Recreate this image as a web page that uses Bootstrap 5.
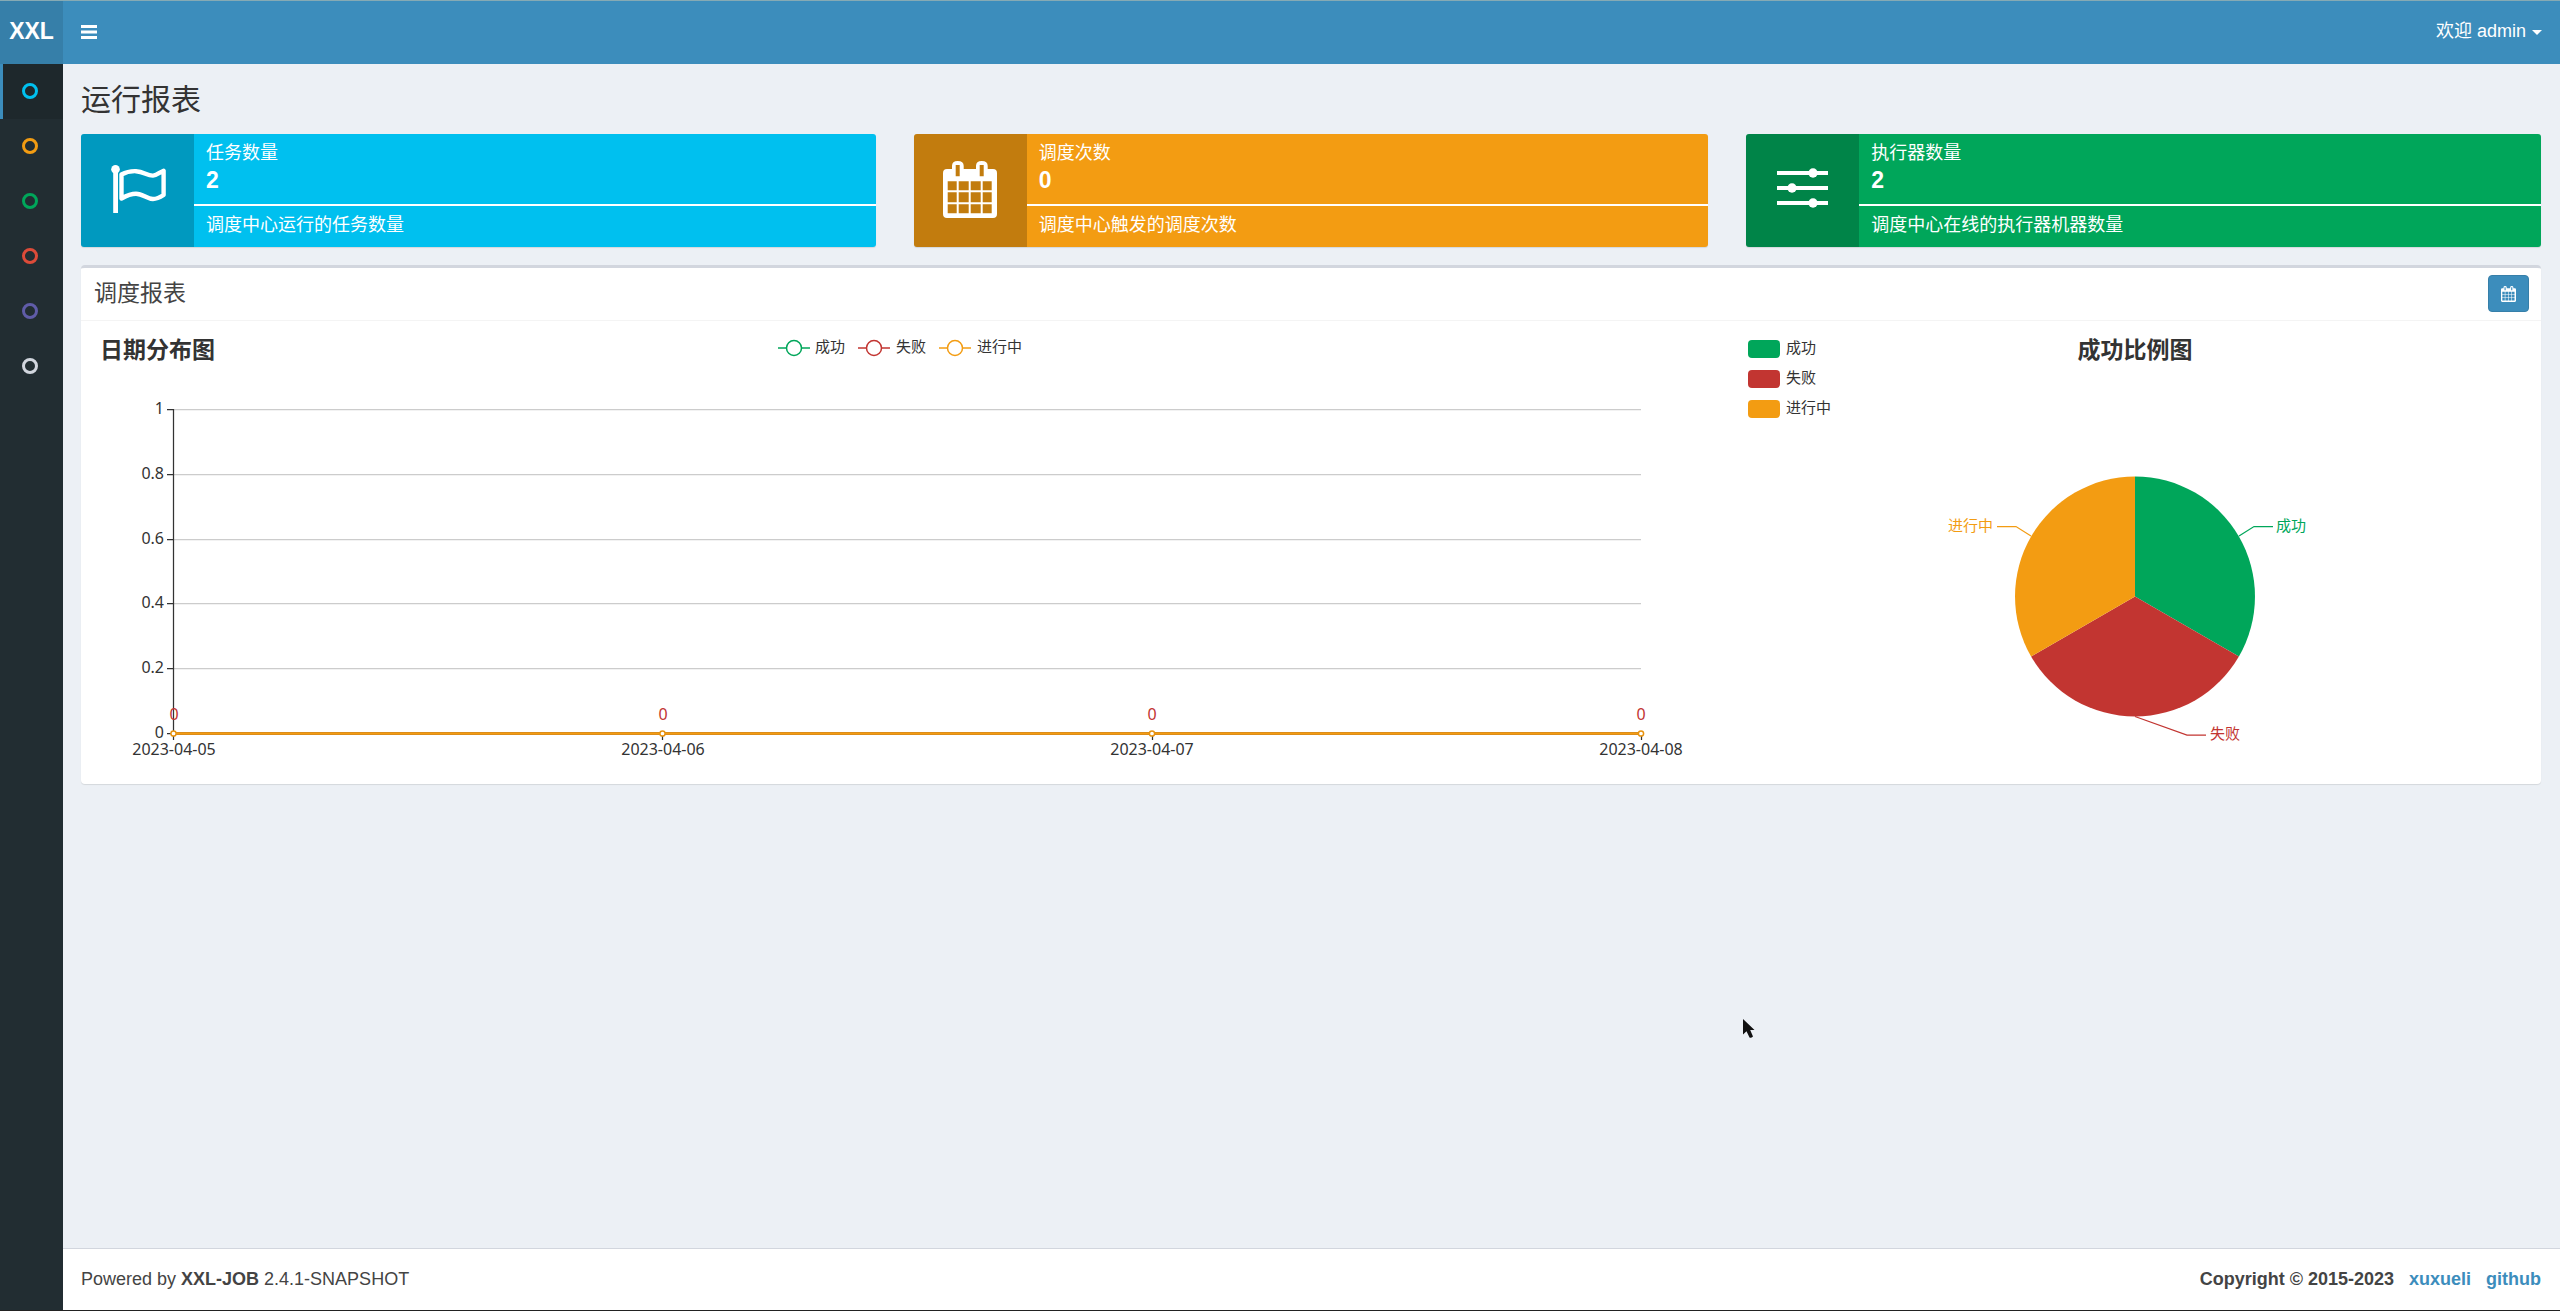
<!DOCTYPE html>
<html lang="zh-CN">
<head>
<meta charset="utf-8">
<meta name="viewport" content="width=device-width, initial-scale=1">
<title>任务调度中心</title>
<link href="https://cdn.jsdelivr.net/npm/bootstrap@5.3.0/dist/css/bootstrap.min.css" rel="stylesheet">
<style>
  :root { --ui-font: "Liberation Sans", "Noto Sans CJK SC", sans-serif; --gap: 18px; }
  body { font-family: var(--ui-font); font-size: 18px; line-height: 25px; color: #444; background: #ecf0f5;
         border-top: 1px solid #86aab4; border-bottom: 1px solid #222; }
  .app-header { height: 63px; background: #3c8dbc; }
  .app-logo { width: 63px; background: #367fa9; color: #fff; font-size: 23px; font-weight: 700; text-decoration: none; padding-bottom: 2px; }
  .bar-btn { border: 0; background: transparent; color: #fff; padding: 0 var(--gap) 2px; }
  .bar-btn::after { margin-left: 6px !important; vertical-align: 2px !important; }
  .app-side { width: 63px; background: #222d32; }
  .side-link { height: 55px; border-left: 3px solid transparent; padding: 0 7px 2px 0; }
  .side-link.active { background: #1e282c; border-left-color: #3c8dbc; }
  .ring { width: 16px; height: 16px; border: 3px solid currentColor; border-radius: 50%; }
  .app-content { padding: 0 19px 0 var(--gap); }
  .page-title { font-size: 30px; line-height: 68px; font-weight: 400; color: #333; margin: 0; padding-top: 2px; }
  .wide-gutter { --bs-gutter-x: 38px; }
  .stat-box { color: #fff; border-radius: 3px; overflow: hidden; box-shadow: 0 1px 1px rgba(0,0,0,.1); }
  .stat-icon { width: 113px; height: 113px; background: rgba(0,0,0,.2); padding-bottom: 3px; }
  .stat-text { padding: 7px 12px 0; }
  .stat-num { font-size: 23px; line-height: 28px; font-weight: 700; }
  .stat-line { height: 2px; margin: 10px -12px 7px; background: #fff; }
  .bg-aqua { background: #00c0ef; } .bg-amber { background: #f39c12; } .bg-leaf { background: #00a65a; }
  .panel { margin-top: var(--gap); background: #fff; border-top: 3px solid #d2d6de; border-radius: 4px; box-shadow: 0 1px 1px rgba(0,0,0,.1); }
  .panel-head { height: 53px; padding: 0 12px 1px 13px; border-bottom: 1px solid #f4f4f4; }
  .panel-title { font-size: 23px; font-weight: 400; margin: 0; }
  .panel-body { padding: 13px; }
  .btn-date { width: 41px; height: 37px; padding: 0; background: #3c8dbc; border: 1px solid #367fa9; color: #fff; border-radius: 4px; }
  .chart { display: block; width: 100%; height: auto; overflow: visible; font-family: "Noto Sans", "Noto Sans CJK SC", sans-serif; font-size: 15px; fill: #333; }
  .chart .axis-num { font-size: 16px; }
  .chart .chart-title { font-size: 23px; font-weight: 700; }
  .app-footer { background: #fff; border-top: 1px solid #d2d6de; padding: 18px 19px 18px var(--gap); }
  .app-footer a { color: #3c8dbc; text-decoration: none; margin-left: 15px; }
  .pointer { left: 68.09%; top: 1018px; pointer-events: none; }
</style>
</head>
<body class="min-vh-100 d-flex flex-column position-relative">
<svg width="0" height="0" class="position-absolute" aria-hidden="true">
  <symbol id="calendar" viewBox="0 0 54 57">
    <path fill="currentColor" fill-rule="evenodd" d="M4 8H9V5Q9 0 14.700 0Q20.700 0 20.700 5V8H33V5Q33 0 38.700 0Q44.700 0 44.700 5V8H50Q54 8 54 12V53Q54 57 50 57H4Q0 57 0 53V12Q0 8 4 8Z
      M12.700 4H16.700V15.300H12.700Z M36.700 4H40.700V15.300H36.700Z
      M4.700 20.300H13.700V29.300H4.700Z M15.700 20.300H25.700V29.300H15.700Z M27.700 20.300H37.700V29.300H27.700Z M39.700 20.300H48.700V29.300H39.700Z
      M4.700 31.300H13.700V41.300H4.700Z M15.700 31.300H25.700V41.300H15.700Z M27.700 31.300H37.700V41.300H27.700Z M39.700 31.300H48.700V41.300H39.700Z
      M4.700 43.300H13.700V52.300H4.700Z M15.700 43.300H25.700V52.300H15.700Z M27.700 43.300H37.700V52.300H27.700Z M39.700 43.300H48.700V52.300H39.700Z"/>
  </symbol>
</svg>

<header class="app-header d-flex">
  <a href="#" class="app-logo d-flex align-items-center justify-content-center">XXL</a>
  <nav class="d-flex flex-grow-1 justify-content-between">
    <button type="button" class="bar-btn d-flex align-items-center" aria-label="切换侧边栏">
      <svg width="16" height="14" viewBox="0 0 16 14" fill="currentColor"><path d="M0 0H16V3H0ZM0 5.500H16V8.500H0ZM0 11H16V14H0Z"/></svg>
    </button>
    <div class="dropdown d-flex">
      <button type="button" class="bar-btn dropdown-toggle" data-bs-toggle="dropdown" aria-expanded="false">欢迎 admin</button>
      <ul class="dropdown-menu dropdown-menu-end"><li><a class="dropdown-item" href="#">注销</a></li></ul>
    </div>
  </nav>
</header>

<div class="d-flex flex-grow-1">
  <aside class="app-side flex-shrink-0">
    <nav class="d-flex flex-column">
      <a href="#" class="side-link active d-flex align-items-center justify-content-center" aria-label="运行报表" style="color:#00c0ef"><span class="ring"></span></a>
      <a href="#" class="side-link d-flex align-items-center justify-content-center" aria-label="任务管理" style="color:#f39c12"><span class="ring"></span></a>
      <a href="#" class="side-link d-flex align-items-center justify-content-center" aria-label="调度日志" style="color:#00a65a"><span class="ring"></span></a>
      <a href="#" class="side-link d-flex align-items-center justify-content-center" aria-label="执行器管理" style="color:#dd4b39"><span class="ring"></span></a>
      <a href="#" class="side-link d-flex align-items-center justify-content-center" aria-label="用户管理" style="color:#605ca8"><span class="ring"></span></a>
      <a href="#" class="side-link d-flex align-items-center justify-content-center" aria-label="使用教程" style="color:#d2d6de"><span class="ring"></span></a>
    </nav>
  </aside>

  <div class="d-flex flex-column flex-grow-1">
    <main class="app-content flex-grow-1">
      <h1 class="page-title">运行报表</h1>
      <div class="row wide-gutter">
        <div class="col-4">
          <div class="stat-box bg-aqua d-flex">
            <div class="stat-icon d-flex align-items-center justify-content-center">
              <svg width="57" height="48" viewBox="-2 0 57 48"><circle cx="4.500" cy="4.300" r="4.300" fill="#fff"/><path d="M2.200 4H7V48H2.200Z" fill="#fff"/><path d="M10.500 9.500C16 6.500 20 6 25 6.200C33 6.500 36 10.800 42 10.600C46 10.400 49 7 52.600 5.800V30C48 33 45 34 42 34C36 34 32 28.800 25 28.800C19 28.800 15 31 10.500 33.500Z" fill="none" stroke="#fff" stroke-width="4.400" stroke-linejoin="round"/></svg>
            </div>
            <div class="stat-text flex-grow-1">
              <div>任务数量</div><div class="stat-num">2</div><div class="stat-line"></div><div>调度中心运行的任务数量</div>
            </div>
          </div>
        </div>
        <div class="col-4">
          <div class="stat-box bg-amber d-flex">
            <div class="stat-icon d-flex align-items-center justify-content-center">
              <svg width="54" height="57" color="#fff"><use href="#calendar"/></svg>
            </div>
            <div class="stat-text flex-grow-1">
              <div>调度次数</div><div class="stat-num">0</div><div class="stat-line"></div><div>调度中心触发的调度次数</div>
            </div>
          </div>
        </div>
        <div class="col-4">
          <div class="stat-box bg-leaf d-flex">
            <div class="stat-icon d-flex align-items-center justify-content-center">
              <svg width="51" height="42" viewBox="0 0 51 42" fill="#fff"><path d="M0 3H51V7H0ZM0 18H51V22H0ZM0 33H51V37H0Z"/><circle cx="36" cy="5" r="4.700"/><circle cx="15" cy="20" r="4.700"/><circle cx="36" cy="35" r="4.700"/></svg>
            </div>
            <div class="stat-text flex-grow-1">
              <div>执行器数量</div><div class="stat-num">2</div><div class="stat-line"></div><div>调度中心在线的执行器机器数量</div>
            </div>
          </div>
        </div>
      </div>

      <section class="panel">
        <div class="panel-head d-flex align-items-center justify-content-between">
          <h2 class="panel-title">调度报表</h2>
          <button type="button" class="btn btn-date d-flex align-items-center justify-content-center" aria-label="选择日期">
            <svg width="15" height="16"><use href="#calendar"/></svg>
          </button>
        </div>
        <div class="panel-body">
          <div class="row wide-gutter">
            <div class="col-8">
              <svg class="chart" viewBox="0 0 1610 437" role="img" aria-label="日期分布图">
                <text class="chart-title" x="6" y="24">日期分布图</text>
                <g fill="#fff" stroke-width="1.500">
                  <g stroke="#00a65a"><path d="M684 14H716"/><circle cx="700" cy="14" r="7.500"/></g>
                  <g stroke="#c23531"><path d="M764 14H796"/><circle cx="780" cy="14" r="7.500"/></g>
                  <g stroke="#f39c12"><path d="M845 14H877"/><circle cx="861" cy="14" r="7.500"/></g>
                </g>
                <text x="721" y="18">成功</text><text x="802" y="18">失败</text><text x="883" y="18">进行中</text>
                <path d="M79 75.500H1547M79 140.500H1547M79 205.500H1547M79 269.500H1547M79 334.500H1547" stroke="#ccc" stroke-width="1.250"/>
                <path d="M79.500 75V406M73 75.500H79M73 140.500H79M73 205.500H79M73 269.500H79M73 334.500H79M73 399.500H79M568.500 400V406M1058.500 400V406M1547.500 400V406" stroke="#333" stroke-width="1.250"/>
                <g class="axis-num" text-anchor="end">
                  <text x="70" y="80">1</text><text x="70" y="145">0.8</text><text x="70" y="210">0.6</text><text x="70" y="274">0.4</text><text x="70" y="339">0.2</text><text x="70" y="404">0</text>
                </g>
                <g class="axis-num" text-anchor="middle">
                  <text x="80" y="421">2023-04-05</text><text x="569" y="421">2023-04-06</text><text x="1058" y="421">2023-04-07</text><text x="1547" y="421">2023-04-08</text>
                </g>
                <g class="axis-num" text-anchor="middle" fill="#c23531">
                  <text x="80" y="386">0</text><text x="569" y="386">0</text><text x="1058" y="386">0</text><text x="1547" y="386">0</text>
                </g>
                <path d="M79 399.500H1547" stroke="#c47f22" stroke-width="3"/>
                <path d="M79 399.500H1547" stroke="#f39c12" stroke-width="2"/>
                <g fill="#fff" stroke="#e8930f" stroke-width="1.500">
                  <circle cx="79.500" cy="399.500" r="2.600"/><circle cx="568.500" cy="399.500" r="2.600"/><circle cx="1058" cy="399.500" r="2.600"/><circle cx="1547" cy="399.500" r="2.600"/>
                </g>
              </svg>
            </div>
            <div class="col-4">
              <svg class="chart" viewBox="0 0 786 437" role="img" aria-label="成功比例图">
                <text class="chart-title" x="393" y="24" text-anchor="middle">成功比例图</text>
                <rect x="6" y="6" width="32" height="18" rx="4" fill="#00a65a"/><rect x="6" y="36" width="32" height="18" rx="4" fill="#c23531"/><rect x="6" y="66" width="32" height="18" rx="4" fill="#f39c12"/>
                <text x="44" y="19">成功</text><text x="44" y="49">失败</text><text x="44" y="79">进行中</text>
                <path d="M393 262.500V142.500A120 120 0 0 1 496.900 322.500Z" fill="#00a65a"/>
                <path d="M393 262.500L496.900 322.500A120 120 0 0 1 289.100 322.500Z" fill="#c23531"/>
                <path d="M393 262.500L289.100 322.500A120 120 0 0 1 393 142.500Z" fill="#f39c12"/>
                <g fill="none" stroke-width="1.250">
                  <path d="M497 202L512 192.500H531" stroke="#00a65a"/><path d="M393 382.500L445 401H464" stroke="#c23531"/><path d="M289 202L274 192.500H255" stroke="#f39c12"/>
                </g>
                <text x="534" y="197" fill="#00a65a">成功</text><text x="468" y="405" fill="#c23531">失败</text><text x="251" y="197" text-anchor="end" fill="#f39c12">进行中</text>
              </svg>
            </div>
          </div>
        </div>
      </section>
    </main>

    <footer class="app-footer d-flex justify-content-between">
      <div>Powered by <b>XXL-JOB</b> 2.4.1-SNAPSHOT</div>
      <div class="fw-bold">Copyright © 2015-2023<a href="#">xuxueli</a><a href="#">github</a></div>
    </footer>
  </div>
</div>

<svg class="pointer position-absolute" width="12" height="20" viewBox="0 0 12 20" aria-hidden="true"><path d="M0 0V15.500L3.500 12.200L6.500 18.500Q8 19.500 10 17.500L7.200 11H11.500Z" fill="#111"/></svg>
<script src="https://cdn.jsdelivr.net/npm/bootstrap@5.3.0/dist/js/bootstrap.bundle.min.js"></script>
</body>
</html>
